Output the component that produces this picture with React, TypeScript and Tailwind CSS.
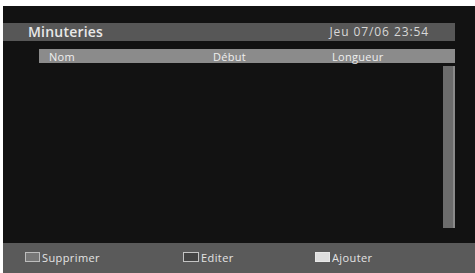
export default function App() {
  return (
    <div
      className="w-[475px] h-[273px] bg-white pl-[3px] pt-[6px] overflow-hidden"
      style={{ fontFamily: '"Open Sans", "DejaVu Sans", sans-serif' }}
    >
      <div className="h-full bg-[#121212] flex flex-col">
        <div className="h-[17px]" />
        {/* title bar */}
        <div className="mr-[20px] h-[18px] bg-[#575757] flex items-center justify-between pl-[25px] pr-[26px]">
          <span className="text-[14px] font-semibold text-[#e8e8e8] leading-none tracking-[0.2px]">Minuteries</span>
          <span className="text-[12px] text-[#d8d8d8] leading-none tracking-[0.9px]">Jeu 07/06 23:54</span>
        </div>
        {/* column header */}
        <div className="mt-[8px] ml-[36px] mr-[20px] h-[14px] bg-[#8b8b8b] flex items-center text-[11px] text-[#efefef] leading-none tracking-[0.3px]">
          <span className="pl-[10px] w-[174px]">Nom</span>
          <span className="w-[119px]">Début</span>
          <span>Longueur</span>
        </div>
        {/* list body */}
        <div className="flex-1 flex justify-end pr-[20px] pt-[3px] pb-[15px]">
          <div className="w-[12px] bg-[#6c6c6c] border-r-2 border-[#8a8a8a]" />
        </div>
        {/* footer */}
        <div className="h-[30px] bg-[#5a5a5a] flex items-center text-[11px] text-[#e4e4e4] leading-none pb-[2px] tracking-[0.4px]">
          <div className="flex items-center ml-[22px] w-[158px]">
            <span className="w-[15px] h-[10px] bg-[#777777] border border-[#bdbdbd] mr-[2px]" />
            <span>Supprimer</span>
          </div>
          <div className="flex items-center w-[132px]">
            <span className="w-[16px] h-[10px] bg-[#444444] border border-[#c4c4c4] mr-[2px]" />
            <span>Editer</span>
          </div>
          <div className="flex items-center">
            <span className="w-[15px] h-[10px] bg-[#dedede] border border-[#e8e8e8] mr-[2px]" />
            <span>Ajouter</span>
          </div>
        </div>
      </div>
    </div>
  );
}
